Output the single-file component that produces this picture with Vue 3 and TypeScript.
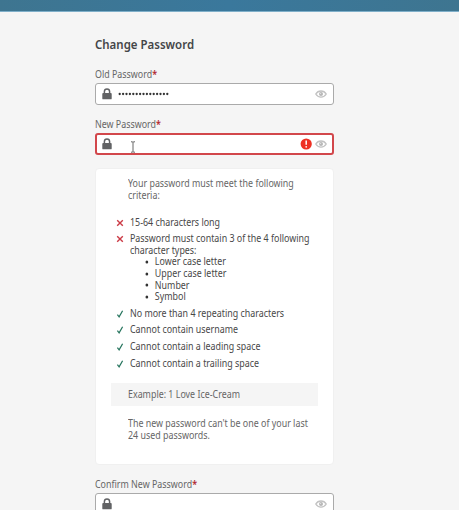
<script setup lang="ts">
interface Rule {
  text: string
  met: boolean
  items?: string[]
}

interface Field {
  id: string
  label: string
  dots: number
  invalid: boolean
}

const fields: Field[] = [
  { id: 'old', label: 'Old Password', dots: 15, invalid: false },
  { id: 'new', label: 'New Password', dots: 0, invalid: true },
  { id: 'confirm', label: 'Confirm New Password', dots: 0, invalid: false },
]

const rules: Rule[] = [
  { text: '15-64 characters long', met: false },
  {
    text: 'Password must contain 3 of the 4 following character types:',
    met: false,
    items: ['Lower case letter', 'Upper case letter', 'Number', 'Symbol'],
  },
  { text: 'No more than 4 repeating characters', met: true },
  { text: 'Cannot contain username', met: true },
  { text: 'Cannot contain a leading space', met: true },
  { text: 'Cannot contain a trailing space', met: true },
]
</script>

<template>
  <div class="page">
    <header class="bar"></header>
    <main class="form">
      <h1>Change Password</h1>
      <template v-for="field in fields" :key="field.id">
        <section class="field">
          <label class="narrow">{{ field.label }}<span class="star">*</span></label>
          <div class="input" :class="{ invalid: field.invalid }">
            <svg class="lock" viewBox="0 0 10 12">
              <path d="M2.4 6V3.6a2.6 2.6 0 0 1 5.2 0V6" fill="none" stroke="#616264" stroke-width="1.5" />
              <rect x="0.3" y="5" width="9.4" height="6.3" rx="0.9" fill="#616264" />
            </svg>
            <svg v-if="field.dots" class="dots" viewBox="0 0 52 4">
              <circle v-for="n in field.dots" :key="n" :cx="n * 3.4 - 1.7" cy="2" r="1.15" fill="#333" />
            </svg>
            <svg v-if="field.invalid" class="caret" viewBox="0 0 6 12">
              <path d="M1 .8h1.2L3 1.3l.8-.5H5M3 1.3v9.4M1 11.2h1.2l.8-.5.8.5H5" fill="none" stroke="#555" stroke-width="0.9" />
            </svg>
            <span class="grow"></span>
            <svg v-if="field.invalid" class="alert" viewBox="0 0 12 12">
              <circle cx="6.2" cy="6" r="5.6" fill="#ee3124" />
              <path d="M6.2 2.5v4.2" stroke="#fff" stroke-width="1.5" />
              <circle cx="6.2" cy="8.8" r="0.85" fill="#fff" />
            </svg>
            <svg class="eye" viewBox="0 0 12 10">
              <path d="M.8 5C3.2.9 8.8.9 11.2 5 8.8 9.1 3.2 9.1.8 5z" fill="none" stroke="#c2c2c2" stroke-width="1.4" />
              <circle cx="6" cy="5" r="2" fill="#b8b8b8" />
              <circle cx="5.6" cy="4.5" r="0.5" fill="#eee" />
            </svg>
          </div>
        </section>
        <section v-if="field.id === 'new'" class="panel">
          <p class="intro narrow">Your password must meet the following criteria:</p>
          <ul class="rules">
            <li v-for="rule in rules" :key="rule.text" class="rule">
              <svg class="mark" viewBox="0 0 8 8">
                <path v-if="rule.met" d="M1.4 4.7 3.1 6.8 6.6.8" fill="none" stroke="#28765f" stroke-width="1.25" />
                <path v-else d="M1.2 1.2l5.6 5.6M6.8 1.2 1.2 6.8" stroke="#cb3a45" stroke-width="1.4" />
              </svg>
              <div class="rule-text narrow">
                <div>{{ rule.text }}</div>
                <ul v-if="rule.items" class="types">
                  <li v-for="item in rule.items" :key="item">
                    <svg class="bullet" viewBox="0 0 4 4"><circle cx="2" cy="2" r="1.6" fill="#333" /></svg>
                    <span>{{ item }}</span>
                  </li>
                </ul>
              </div>
            </li>
          </ul>
          <div class="example"><div class="narrow">Example: 1 Love Ice-Cream</div></div>
          <p class="history narrow">The new password can't be one of your last 24 used passwords.</p>
        </section>
      </template>
    </main>
  </div>
</template>

<style>
body {
  background: #f5f5f5;
  overflow: hidden;
}
</style>

<style scoped>
.page {
  height: 510px;
  overflow: hidden;
  background: #f5f5f5;
  font: 10px/11.6px "Noto Sans", sans-serif;
  color: #666;
}
.narrow {
  transform: scaleX(0.888);
  transform-origin: left top;
}
.bar {
  height: 12px;
  box-sizing: border-box;
  border-bottom: 1px solid #7fafc9;
  background: linear-gradient(90deg, #3e7590, #3a789c 50%, #3e7590);
}
.form {
  width: 239px;
  margin-left: 95px;
  padding-top: 25px;
}
h1 {
  margin: 0 0 20px;
  font-size: 12px;
  line-height: 16px;
  font-weight: 600;
  color: #444648;
  transform: scaleX(0.955);
  transform-origin: left top;
}
.field {
  height: 50px;
  box-sizing: border-box;
}
label {
  display: block;
  height: 10px;
  line-height: 2px;
}
.star {
  color: #b3262e;
  font-weight: 600;
}
.input {
  display: flex;
  align-items: center;
  box-sizing: border-box;
  height: 22px;
  padding: 0 6px;
  border: 1px solid #aaa;
  border-radius: 3px;
  background: #fff;
}
.input.invalid {
  padding: 0 5px;
  border: 2px solid #d2474b;
}
.lock {
  width: 10px;
  height: 12px;
  margin-bottom: 1px;
}
.dots {
  width: 52px;
  height: 4px;
  margin-left: 6px;
}
.caret {
  width: 6px;
  height: 12px;
  margin: 5px 0 0 18px;
}
.grow {
  flex: 1;
}
.alert {
  width: 12px;
  height: 12px;
  margin: 0 3px 1px 0;
}
.eye {
  width: 12px;
  height: 10px;
}
.panel {
  box-sizing: border-box;
  height: 297px;
  margin: -5px 0 18px;
  padding: 9px 15px 0;
  border: 1px solid #f0f0f0;
  border-radius: 4px;
  background: #fff;
}
p {
  margin: 0 0 0 17px;
}
.intro {
  width: 192px;
}
.history {
  width: 210px;
}
ul {
  margin: 0;
  padding: 0;
  list-style: none;
}
.rules {
  margin-top: 15.4px;
  color: #484848;
}
.rule {
  display: flex;
  margin-bottom: 5px;
}
.mark {
  flex: none;
  width: 8px;
  height: 8px;
  margin: 2px 6px 0 5px;
}
.rule-text {
  flex: none;
  width: 212px;
}
.types {
  padding-left: 17px;
}
.types li {
  display: flex;
  align-items: center;
  gap: 7px;
}
.bullet {
  width: 4px;
  height: 4px;
}
.example {
  height: 23px;
  margin: 13.6px 0 12.6px;
  padding-left: 17px;
  line-height: 23px;
  background: #f5f5f5;
}
</style>
